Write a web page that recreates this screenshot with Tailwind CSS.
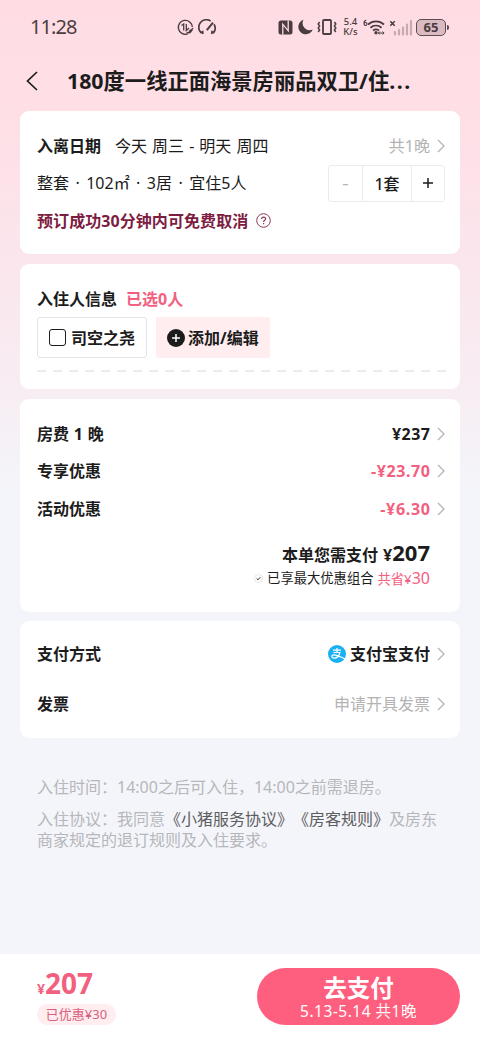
<!DOCTYPE html>
<html lang="zh-CN">
<head>
<meta charset="utf-8">
<title>订单确认</title>
<script src="https://cdn.jsdelivr.net/npm/@tailwindcss/browser@4"></script>
</head>
<body class="w-[480px] h-[1040px] overflow-hidden bg-[#f4f5fa] font-['Noto_Sans','Noto_Sans_CJK_SC',sans-serif] text-[16px] leading-[24px] text-[#1c1c1c] whitespace-nowrap">
<svg class="hidden"><symbol id="chev" viewBox="0 0 8 14"><path d="M1 1l6 6-6 6" fill="none" stroke="#b3b3b3" stroke-width="1.3"/></symbol></svg>
<div class="w-[480px] h-[1040px] flex flex-col bg-[linear-gradient(180deg,#ffdce3_0px,#ffdfe6_110px,#fbe5ec_250px,#f8ecf2_370px,#f4f5fa_490px)]">
  <header class="h-[111px] shrink-0 flex flex-col">
    <div class="h-[54px] flex items-center text-[#4a3d41] pl-[30px]">
      <span class="w-[147px] text-[20px] tracking-[-0.9px]">11:28</span>
      <svg class="w-[17px] h-[17px]" viewBox="0 0 17 17" fill="none" stroke="currentColor" stroke-width="1.4"><path d="M10.500 15A7 7 0 1 1 15.300 8"/><path d="M4.500 6.500L6.700 5v6.500M9.300 5v6.500l2.700-2.500" stroke-width="1.300"/><path d="M9.500 13.500c3 1 5-.500 5.800-3.500l-3.500 2.500" stroke-width="1.500"/></svg>
      <svg class="ml-[4px] w-[19px] h-[17px]" viewBox="0 0 19 17" fill="none" stroke="currentColor" stroke-width="1.7"><path d="M5 15l-.4-2.300-1.600 1A7.600 7.600 0 0 1 12.6 2M16 5.200a7.600 7.600 0 0 1-.4 8.500l-1.500-1-.5 2.300"/><path d="M8.800 11.200L15 3.600" stroke-width="2"/></svg>
      <svg class="ml-[61px] w-[15px] h-[15px]" viewBox="0 0 15 15"><rect x=".5" y=".5" width="14" height="14" rx="2.5" fill="currentColor"/><path d="M4.8 14.5V4.2l5.4 6.6V.5" fill="none" stroke="#ffdde4" stroke-width="1.3"/></svg>
      <svg class="ml-[5px] w-[15px] h-[16px]" viewBox="0 0 15 16"><path d="M5.500.8a7.400 7.400 0 1 0 9.200 9.600A7 7 0 0 1 5.500.8z" fill="currentColor"/></svg>
      <svg class="ml-[4px] w-[20px] h-[16px]" viewBox="0 0 20 16" fill="none" stroke="currentColor"><rect x="6" y="1" width="8" height="14" rx="1" stroke-width="1.8"/><path d="M2.600 3l-1.400 2 1.400 2-1.400 2 1.400 2-1.400 2M17.400 3l1.400 2-1.400 2 1.400 2-1.400 2 1.400 2" stroke-width="1.500"/></svg>
      <span class="ml-[5px] w-[17px] flex flex-col items-center text-[9.500px] leading-[10px] font-medium"><span class="h-[10px]">5.4</span><span class="h-[10px]">K/s</span></span>
      <svg class="ml-[4px] w-[22px] h-[17px]" viewBox="0 0 22 17" fill="none" stroke="currentColor"><path d="M3.300 1.300C1.500 1.300 1 3 1 4.500s.4 2 1.500 2 1.500-.6 1.500-1.500-.6-1.500-1.500-1.500S1 4 1 4.700" stroke-width="1.100"/><path d="M5 5.500c4.600-4.200 11.400-4.200 16 0M7.400 8.700c3.300-2.900 7.900-2.900 11.200 0M10 11.500c1.900-1.500 4.100-1.500 6 0" stroke-width="1.800"/><circle cx="13" cy="13.800" r="1.700" fill="currentColor" stroke="none"/><path d="M15.500 14h5.500M16.800 12.500l-1.500 1.500 1.500 1.500M19.600 12.500l1.500 1.500-1.500 1.500" stroke-width="1"/></svg>
      <svg class="ml-[4px] w-[24px] h-[17px]" viewBox="0 0 24 17" fill="none"><path d="M1.300 2.300l4.400 4.400M5.700 2.300L1.300 6.700" stroke="currentColor" stroke-width="1.600"/><path d="M6 15.500v-2.500M10 15.500v-4.500M14 15.500V8.500M18 15.500V5.500M22 15.500V2" stroke="#c5aab1" stroke-width="2.200" stroke-linecap="round"/></svg>
      <span class="ml-[3px] w-[30px] h-[17px] rounded-[5px] border-[1.5px] border-[#5c4d52] bg-[#dcbac2] flex items-center justify-center text-[13px] leading-[15px] font-bold">65</span><span class="w-[2px] h-[5px] ml-px rounded-r bg-[#5c4d52]"></span>
    </div>
    <div class="h-[53px] flex items-center pl-[26px]">
      <svg class="w-[12px] h-[20px]" viewBox="0 0 12 20"><path d="M11 1L1.500 10l9.500 9" fill="none" stroke="#1c1c1c" stroke-width="1.700"/></svg>
      <h1 class="ml-[29px] text-[21.300px] font-bold">180度一线正面海景房丽品双卫/住<span class="tracking-[1.500px]">...</span></h1>
    </div>
  </header>

  <section class="mx-[20px] h-[143px] shrink-0 rounded-[9px] bg-white pt-[16px] pl-[17px] pr-[15px]">
    <div class="h-[37px] flex items-center"><b>入离日期</b><span class="ml-[14px] [word-spacing:0.900px]">今天 周三 - 明天 周四</span><span class="ml-auto text-[#b3b3b3]">共1晚</span><svg class="ml-[7px] w-[8px] h-[14px]"><use href="#chev"/></svg></div>
    <div class="h-[38px] flex items-center justify-between"><span class="[word-spacing:2.300px]">整套 · 102㎡ · 3居 · 宜住5人</span>
      <div class="w-[117px] h-[37px] rounded-[3px] border border-[#ebebeb] flex text-center leading-[36px]"><span class="w-[33px] flex items-center justify-center text-[#b3b3b3]"><span class="leading-[36px] scale-x-125">-</span></span><span class="w-[50px] border-x border-[#ebebeb] font-medium">1套</span><span class="flex-1 flex items-center justify-center"><svg class="w-[10px] h-[10px]" viewBox="0 0 10 10"><path d="M0 5h10M5 0v10" stroke="#1c1c1c" stroke-width="1.500"/></svg></span></div></div>
    <div class="h-[37px] flex items-center text-[#7d1d41]"><b class="tracking-[0.070px]">预订成功30分钟内可免费取消</b><svg class="ml-[8px] w-[15px] h-[15px]" viewBox="0 0 15 15" fill="none" stroke="#8d3a58" stroke-width="1"><circle cx="7.500" cy="7.500" r="6.800"/><path d="M5.600 6c0-2.600 4-2.500 4-.2 0 1.500-2 1.500-2 3.100M7.600 10v1.300" stroke-width="1.200"/></svg></div>
  </section>

  <section class="mt-[10px] mx-[20px] h-[125px] shrink-0 rounded-[9px] bg-white pt-[23px] pl-[17px]">
    <div class="flex"><b>入住人信息</b><b class="ml-[9px] text-[#f3607f]">已选0人</b></div>
    <div class="mt-[6px] flex gap-[9px] font-bold">
      <div class="w-[110px] h-[41px] rounded-[3px] border border-[#e4e4e4] flex items-center pl-[11px]"><span class="w-[17px] h-[17px] rounded-[3px] border-[1.500px] border-[#1c1c1c]"></span><span class="ml-[5px]">司空之尧</span></div>
      <div class="w-[114px] h-[41px] rounded-[2px] bg-[#ffedef] flex items-center pl-[11px]"><svg class="w-[18px] h-[18px]" viewBox="0 0 18 18"><circle cx="9" cy="9" r="9" fill="#1c1c1c"/><path d="M5 9h8M9 5v8" stroke="#fff" stroke-width="1.500"/></svg><span class="ml-[3px]">添加/编辑</span></div>
    </div>
    <svg class="mt-[12px] w-[409px] h-[2px]"><path d="M0 1h409" stroke="#e6e6e6" stroke-width="1.300" stroke-dasharray="9 7"/></svg>
  </section>

  <section class="mt-[10px] mx-[20px] h-[213px] shrink-0 rounded-[9px] bg-white pt-[16px] pl-[17px] pr-[15px]">
    <div class="h-[37px] flex items-center"><b class="[word-spacing:0.700px]">房费 1 晚</b><b class="ml-auto tracking-[0.500px] -mr-[0.500px]">¥237</b><svg class="ml-[7px] w-[8px] h-[14px]"><use href="#chev"/></svg></div>
    <div class="h-[38px] flex items-center"><b>专享优惠</b><b class="ml-auto tracking-[0.600px] -mr-[0.600px] text-[#f3607f]">-¥23.70</b><svg class="ml-[7px] w-[8px] h-[14px]"><use href="#chev"/></svg></div>
    <div class="h-[37px] flex items-center"><b>活动优惠</b><b class="ml-auto tracking-[0.700px] -mr-[0.700px] text-[#f3607f]">-¥6.30</b><svg class="ml-[7px] w-[8px] h-[14px]"><use href="#chev"/></svg></div>
    <div class="mt-[13px] pr-[15px] h-[24px] flex justify-end items-baseline font-bold"><span>本单您需支付</span><span class="ml-[5px]">¥</span><span class="text-[22px]">207</span></div>
    <div class="pr-[15px] h-[28px] flex justify-end items-center text-[13.300px]"><svg class="w-[9px] h-[9px] mr-[4px]" viewBox="0 0 9 9" fill="none"><circle cx="4.500" cy="4.500" r="4" stroke="#ddd" stroke-width=".8"/><path d="M2.600 4.500L4 5.800l2.300-2.600" stroke="#333"/></svg><span>已享最大优惠组合</span><span class="ml-[4px] text-[#f3607f]">共省¥<span class="text-[16px]">30</span></span></div>
  </section>

  <section class="mt-[9px] mx-[20px] h-[117px] shrink-0 rounded-[9px] bg-white pt-[8px] pl-[17px] pr-[15px]">
    <div class="h-[50px] flex items-center"><b>支付方式</b><svg class="ml-auto w-[18px] h-[18px]" viewBox="0 0 18 18"><circle cx="9" cy="9" r="9" fill="#1ab0f2"/><path d="M5 5.200h8M9 3v4.500M5.500 7.500h6.400c-.8 3.200-3.200 5.600-5.500 5.600-3.300 0-3.200-3.300-.5-3.300 2.600 0 5.500 1.700 11 3.900" fill="none" stroke="#fff" stroke-width="1.200"/></svg><b class="ml-[4px]">支付宝支付</b><svg class="ml-[7px] w-[8px] h-[14px]"><use href="#chev"/></svg></div>
    <div class="h-[50px] flex items-center"><b>发票</b><span class="ml-auto text-[#b3b3b3]">申请开具发票</span><svg class="ml-[7px] w-[8px] h-[14px]"><use href="#chev"/></svg></div>
  </section>

  <div class="mt-[39px] pl-[37px] text-[#b6b7bb] leading-[21px]">
    <p>入住时间：14:00之后可入住，14:00之前需退房。</p>
    <p class="mt-[11px]">入住协议：我同意<span class="text-[#5d5d60]">《小猪服务协议》<span class="ml-[8px]">《房客规则》</span></span>及房东</p>
    <p>商家规定的退订规则及入住要求。</p>
  </div>

  <footer class="mt-auto h-[86px] shrink-0 bg-white flex justify-between pl-[37px] pr-[20px]">
    <div class="pt-[13px]">
      <div class="h-[32px] leading-[32px] flex items-baseline font-bold text-[#f3607f]"><span class="text-[14px]">¥</span><span class="text-[28px]">207</span></div>
      <div class="mt-[5px] w-[79px] h-[21px] rounded-full bg-[#ffedf0] text-[#d9607c] text-[13px] leading-[21px] text-center">已优惠¥30</div>
    </div>
    <div class="mt-[14px] w-[203px] h-[57px] rounded-full bg-[#ff5f7e] text-white text-center"><div class="mt-[6px] h-[28px] leading-[28px] text-[23.500px] font-bold">去支付</div><div class="h-[18px] leading-[18px] text-[15.500px] tracking-[0.500px]">5.13-5.14 共1晚</div></div>
  </footer>
</div>
</body>
</html>
